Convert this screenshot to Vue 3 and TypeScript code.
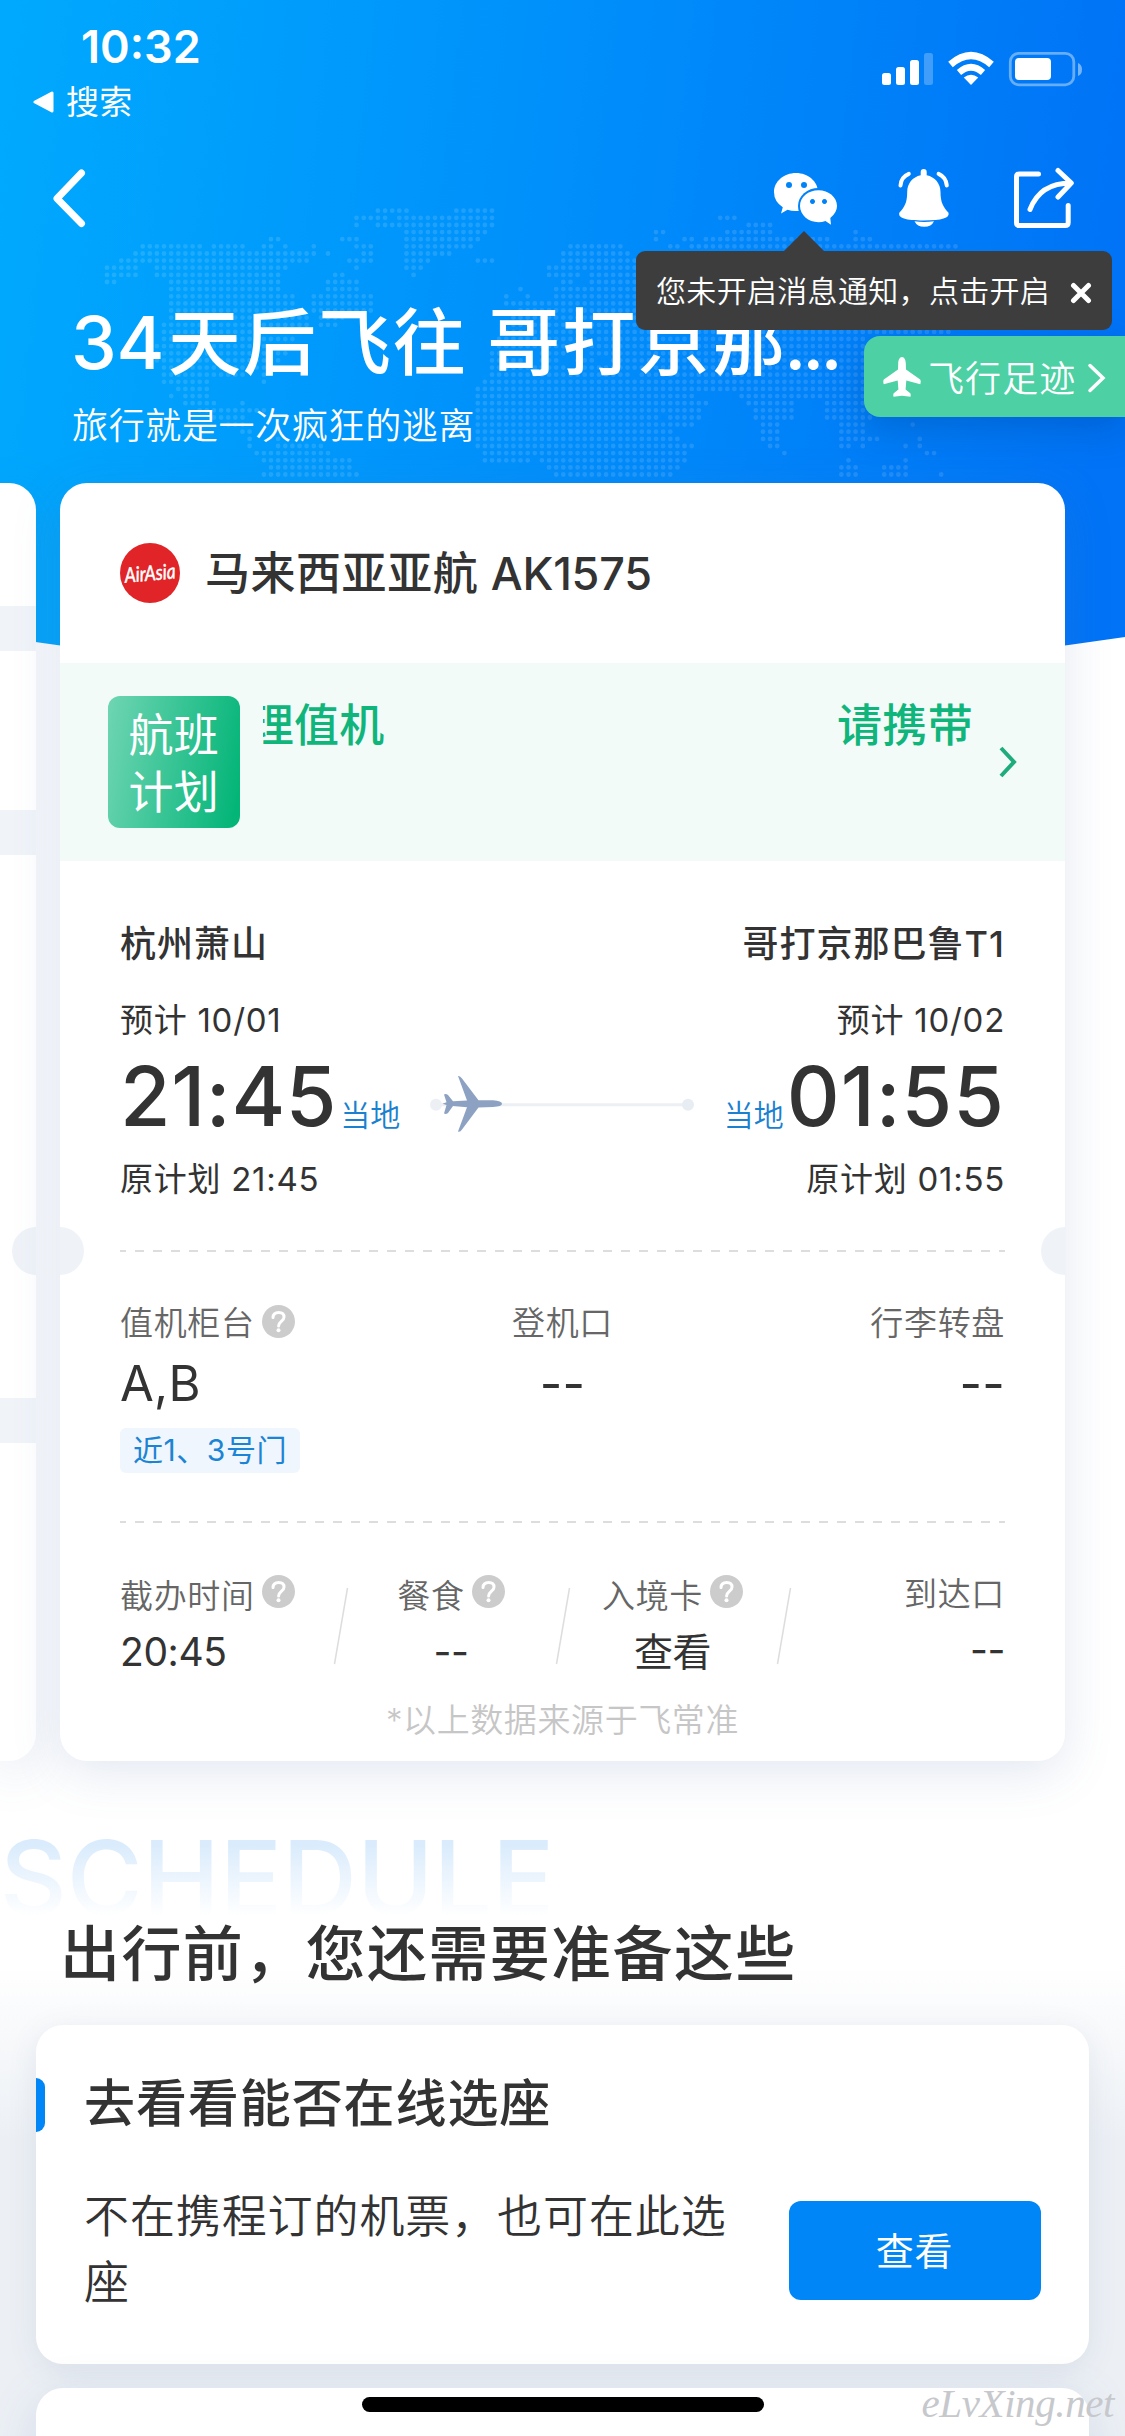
<script setup lang="ts">
type Run = [number, number]

/* World map backdrop: one entry per dot row, each a list of x ranges. */
const PITCH = 7.13
const FIRST_ROW = 210.7
const mapRows: Run[][] = [
  [[375, 404], [453, 489]],
  [[360, 384], [396, 489], [722, 738]],
  [[360, 360], [381, 489], [750, 773]],
  [[410, 483], [658, 665], [728, 773], [856, 856]],
  [[268, 275], [340, 355], [410, 475], [658, 658], [686, 695], [708, 830], [856, 870]],
  [[140, 200], [212, 243], [262, 270], [283, 283], [311, 311], [353, 368], [410, 470], [574, 618], [672, 680], [693, 957]],
  [[135, 312], [326, 326], [362, 370], [404, 450], [566, 625], [660, 990]],
  [[119, 305], [348, 370], [404, 425], [475, 490], [565, 990]],
  [[106, 136], [155, 285], [355, 355], [404, 418], [546, 575], [588, 980]],
  [[106, 134], [155, 280], [332, 340], [411, 411], [546, 575], [590, 970]],
  [[106, 113], [170, 276], [325, 355], [560, 570], [595, 960]],
  [[170, 280], [325, 355], [517, 517], [553, 570], [580, 960]],
  [[170, 290], [312, 370], [503, 503], [525, 525], [553, 570], [580, 960]],
  [[170, 290], [312, 370], [503, 525], [538, 950]],
  [[170, 300], [312, 370], [517, 950]],
  [[170, 305], [320, 345], [510, 950]],
  [[165, 305], [320, 335], [510, 950]],
  [[162, 298], [503, 950]],
  [[162, 290], [496, 585], [600, 860]],
  [[155, 285], [496, 560], [585, 860]],
  [[155, 283], [489, 530], [545, 560], [595, 860]],
  [[155, 276], [489, 520], [545, 553], [575, 590], [610, 860]],
  [[162, 262], [489, 560], [575, 860]],
  [[162, 185], [192, 243], [262, 262], [489, 630], [640, 860]],
  [[162, 210], [262, 262], [482, 690], [700, 860]],
  [[175, 210], [480, 690], [695, 880]],
  [[170, 170], [185, 205], [475, 680], [688, 695], [742, 880]],
  [[185, 215], [240, 240], [475, 705], [750, 795], [830, 870]],
  [[197, 225], [232, 262], [475, 700], [755, 795], [828, 880]],
  [[211, 240], [475, 655], [668, 700], [757, 795], [828, 870]],
  [[226, 240], [475, 660], [670, 690], [762, 778], [838, 862], [912, 912]],
  [[240, 250], [478, 668], [762, 778], [840, 862]],
  [[247, 247], [275, 280], [480, 675], [762, 778], [838, 880], [920, 920]],
  [[247, 247], [275, 320], [480, 690], [770, 780], [838, 848], [863, 863], [905, 905], [920, 920]],
  [[255, 328], [482, 682], [783, 783], [925, 932]],
  [[265, 350], [487, 530], [540, 682], [849, 849], [905, 905]],
  [[268, 352], [552, 675], [842, 858], [887, 905]],
  [[262, 355], [558, 668], [838, 855], [882, 907], [941, 941]],
]
const mapPath = mapRows
  .map((runs, r) =>
    runs
      .map(([from, to]) => {
        const a = Math.round((from - 107) / PITCH)
        const b = Math.round((to - 107) / PITCH)
        let d = ''
        for (let c = a; c <= b; c++) d += `M${(107 + c * PITCH).toFixed(1)} ${(FIRST_ROW + r * PITCH).toFixed(1)}h0`
        return d
      })
      .join(''),
  )
  .join('')

const gates = [
  { label: '值机柜台', value: 'A,B', help: true, tag: '近1、3号门' },
  { label: '登机口', value: '--', help: false, tag: '' },
  { label: '行李转盘', value: '--', help: false, tag: '' },
]
const extras = [
  { label: '截办时间', value: '20:45', help: true },
  { label: '餐食', value: '--', help: true },
  { label: '入境卡', value: '查看', help: true },
  { label: '到达口', value: '--', help: false },
]
</script>

<template>
  <div class="page">
    <svg class="sky" width="1125" height="700" viewBox="0 0 1125 700">
      <defs>
        <linearGradient id="sky" gradientUnits="userSpaceOnUse" x1="0" y1="120" x2="1125" y2="250">
          <stop offset="0" stop-color="#00a9fd" />
          <stop offset="0.5" stop-color="#008ffb" />
          <stop offset="1" stop-color="#0073f6" />
        </linearGradient>
      </defs>
      <path d="M0 0H1125V637Q562 721 0 637Z" fill="url(#sky)" />
      <path :d="mapPath" class="dots" />
    </svg>

    <header class="top">
      <div class="status">
        <div class="clock">
          <div class="time">10:32</div>
          <div class="back-app">
            <svg width="22" height="22" viewBox="0 0 22 22"><path d="M2 11 19 2V20Z" fill="#fff" stroke="#fff" stroke-width="3" stroke-linejoin="round" /></svg>
            <span>搜索</span>
          </div>
        </div>
        <svg class="signals" width="202" height="36" viewBox="881 51 202 36">
          <g fill="#fff">
            <rect x="882" y="73" width="9" height="12" rx="2.5" />
            <rect x="896" y="67" width="9" height="18" rx="2.5" />
            <rect x="910" y="60" width="9" height="25" rx="2.5" />
            <rect x="924" y="53" width="9" height="32" rx="2.5" opacity=".25" />
            <path d="M971 85 963.8 77.6Q971 71.800 978.2 77.600Z" />
            <rect x="1015" y="58" width="36" height="22" rx="4" />
            <path d="M1078 63q4 1.500 4 6.500t-4 6.500z" opacity=".45" />
          </g>
          <g fill="none" stroke="#fff">
            <path d="M950.500 64.500Q971 46.500 991.500 64.500" stroke-width="7" />
            <path d="M959 72.500Q971 62 983 72.500" stroke-width="6.500" />
            <rect x="1010.300" y="53.300" width="63.500" height="31.500" rx="8.500" stroke-width="2.800" opacity=".4" />
          </g>
        </svg>
      </div>

      <nav class="nav">
        <svg class="back" width="40" height="64" viewBox="0 0 40 64"><path d="M30.500 7 6 32.500 30.500 57.500" fill="none" stroke="#fff" stroke-width="7" stroke-linecap="round" stroke-linejoin="round" /></svg>
        <div class="actions">
          <svg width="68" height="64" viewBox="770 166 68 64" fill="#fff">
            <mask id="chat">
              <rect x="770" y="166" width="68" height="64" fill="#fff" />
              <ellipse cx="818.500" cy="206" rx="20.500" ry="18" fill="#000" />
              <circle cx="789" cy="185" r="3" fill="#000" />
              <circle cx="804" cy="185" r="3" fill="#000" />
            </mask>
            <path mask="url(#chat)" d="M796 173C808 173 818 181.500 818 192S808 211 796 211Q791 211 787.500 209.700L781 213.500 782.800 207.300Q774 201.500 774 192C774 181.500 784 173 796 173Z" />
            <path fill-rule="evenodd" d="M818.500 190.300C828.700 190.300 837 197.300 837 206Q837 212.500 830.300 218L831 224.800 825.500 221Q822 222.200 818.500 222.200C808.300 222.200 800 215 800 206S808.300 190.300 818.500 190.300ZM812.500 199a2.500 2.500 0 1 0 .01 0ZM824.500 199a2.500 2.500 0 1 0 .01 0Z" />
          </svg>
          <svg width="54" height="62" viewBox="898 167 54 62">
            <path fill="#fff" d="M920.700 172a3 3 0 0 1 6 0V175.300C935 177 940.500 183.500 940.500 192 940.500 203 943.500 207 948.500 212.800 950 218 942 220.500 923.700 220.500S898 218 899.300 212.800C904.500 207 907.200 203 907.200 192 907.200 183.500 912.500 177 920.700 175.300ZM914.500 221.300Q924 222.700 934 221.300 931.500 226.800 924.300 226.800T914.500 221.300Z" />
            <path d="M900.500 185.500Q901 177 908.800 173.800M946.800 185.500Q946 177 938.600 173.800" fill="none" stroke="#fff" stroke-width="4" stroke-linecap="round" />
          </svg>
          <svg width="64" height="64" viewBox="1012 166 64 64" fill="none" stroke="#fff" stroke-width="5" stroke-linecap="round" stroke-linejoin="round">
            <path d="M1038.500 174H1019.500Q1016.500 174 1016.500 177V222.500Q1016.500 225.500 1019.500 225.500H1065Q1068.200 225.500 1068.200 222.500V205.500M1030 209.500Q1040 183 1071 183M1058 170.500 1071.300 183 1058 197" />
          </svg>
        </div>
      </nav>

      <h1 class="title"><span class="days">34</span>天后飞往 哥打京那<span class="ell">...</span></h1>
      <p class="subtitle">旅行就是一次疯狂的逃离</p>
    </header>

    <div class="tooltip">
      <span>您未开启消息通知，点击开启</span>
      <svg width="22" height="22" viewBox="0 0 22 22"><path d="M3.500 3.500 18.500 18.500M18.500 3.500 3.500 18.500" stroke="#fff" stroke-width="5" stroke-linecap="round" /></svg>
    </div>

    <div class="footprint">
      <svg width="38" height="40" viewBox="0 0 38 40"><path fill="#fff" d="M19 0C21.500 0 22.700 3 22.800 6.500L23 12.500 37.200 22.500Q38.200 24 37.300 27.300L23.300 23.500 22.600 32.500 27.300 36.200Q28 37.500 27.500 39.700L19 38.800 10.500 39.700Q10 37.500 10.700 36.200L15.400 32.500 14.700 23.500.7 27.300Q-.2 24 .8 22.500L15 12.500 15.200 6.500C15.300 3 16.500 0 19 0Z" /></svg>
      <span>飞行足迹</span>
      <svg width="20" height="32" viewBox="0 0 20 32"><path d="M3 3.500 16 16 3 28.500" fill="none" stroke="#fff" stroke-width="3.500" stroke-linecap="round" /></svg>
    </div>

    <section class="carousel">
      <div class="card prev">
        <i class="band b1" /><i class="band b2" /><i class="band b3" />
        <b class="notch right" />
      </div>

      <article class="card flight">
        <b class="notch left" /><b class="notch right" />
        <div class="airline">
          <svg width="60" height="60" viewBox="0 0 60 60">
            <circle cx="30" cy="30" r="30" fill="#e12427" />
            <text x="4.500" y="37.500" class="logo" textLength="51" lengthAdjust="spacingAndGlyphs" transform="rotate(-5 30 30)">AirAsia</text>
          </svg>
          <span>马来西亚亚航 <span class="code">AK1575</span></span>
        </div>

        <div class="plan">
          <div class="plan-badge">航班<br />计划</div>
          <div class="ticker"><span class="slide">理值机</span><span>请携带</span></div>
          <svg width="20" height="34" viewBox="0 0 20 34"><path d="M3 3 16 17 3 31" fill="none" stroke="#1fac7c" stroke-width="4" /></svg>
        </div>

        <div class="body">
          <div class="row airports"><span>杭州萧山</span><span>哥打京那巴鲁T1</span></div>
          <div class="row small est"><span>预计 10/01</span><span>预计 10/02</span></div>
          <div class="row times">
            <div class="clocktime"><strong>21:45</strong><em>当地</em></div>
            <svg class="route" width="270" height="64" viewBox="428 1072 270 64">
              <path d="M437 1104.700H689" stroke="#ecf0f5" stroke-width="3" />
              <circle cx="437" cy="1104.700" r="6" fill="#ecf0f5" /><circle cx="689" cy="1104.700" r="6" fill="#e8edf4" />
              <path fill="#8da2c3" d="M459 1076Q461 1075.500 463 1078.500L479.500 1100.300 494 1100.300Q503 1101 503 1103.700T494 1107L479.500 1107.500 463 1129.500Q461 1132.500 459 1131.500L468 1107.200 454 1106 449 1113Q447 1114.500 445 1113.500L447.500 1105 443.500 1103.700 447.500 1102.300 445 1094.500Q447 1093.500 449 1095L454 1101.200 468 1100.500Z" />
            </svg>
            <div class="clocktime arrive"><em>当地</em><strong>01:55</strong></div>
          </div>
          <div class="row small orig"><span>原计划 21:45</span><span>原计划 01:55</span></div>

          <div class="dash d1" />

          <div class="gates">
            <div v-for="g in gates" :key="g.label" class="gate">
              <div class="label">{{ g.label }}<svg v-if="g.help" class="help" width="33" height="33" viewBox="0 0 33 33"><circle cx="16.500" cy="16.500" r="16.500" fill="#ccc" /><path d="M11 12.600Q11.200 7.500 16.700 7.500T22 12.300C22 16 16.600 16.300 16.600 21" fill="none" stroke="#fff" stroke-width="3" stroke-linecap="round" /><circle cx="16.500" cy="25.300" r="2" fill="#fff" /></svg></div>
              <div class="value">{{ g.value }}</div>
              <div v-if="g.tag" class="tag">{{ g.tag }}</div>
            </div>
          </div>

          <div class="dash d2" />

          <div class="extras">
            <template v-for="(e, i) in extras" :key="e.label">
              <svg v-if="i" class="slash" width="16" height="78" viewBox="0 0 16 78"><path d="M14.500 1 1.500 77" stroke="#ddd" stroke-width="1.500" /></svg>
              <div class="extra">
                <div class="label">{{ e.label }}<svg v-if="e.help" class="help" width="33" height="33" viewBox="0 0 33 33"><circle cx="16.500" cy="16.500" r="16.500" fill="#ccc" /><path d="M11 12.600Q11.200 7.500 16.700 7.500T22 12.300C22 16 16.600 16.300 16.600 21" fill="none" stroke="#fff" stroke-width="3" stroke-linecap="round" /><circle cx="16.500" cy="25.300" r="2" fill="#fff" /></svg></div>
                <div class="value">{{ e.value }}</div>
              </div>
            </template>
          </div>
          <p class="source">*以上数据来源于飞常准</p>
        </div>
      </article>
    </section>

    <section class="prepare">
      <div class="ghost">SCHEDULE</div>
      <h2>出行前，您还需要准备这些</h2>
      <article class="card task">
        <i class="mark" />
        <h3>去看看能否在线选座</h3>
        <div class="task-row">
          <p>不在携程订的机票，也可在此选座</p>
          <button type="button">查看</button>
        </div>
      </article>
      <article class="card next" />
    </section>

    <div class="home" />
    <div class="watermark">eLvXing.net</div>
  </div>
</template>

<style>
body { margin: 0; }
</style>

<style scoped>
.page {
  position: relative;
  width: 1125px;
  height: 2436px;
  overflow: hidden;
  font-family: Inter, "Noto Sans CJK SC", sans-serif;
  color: #333;
  background: linear-gradient(#fff 1965px, #ecf0f5 2140px);
  letter-spacing: 0.02em;
}
h1, h2, h3, p { margin: 0; font-weight: 500; }
svg { display: block; flex: none; }
.sky { position: absolute; left: 0; top: 0; }
.dots { fill: none; stroke: #fff; stroke-opacity: 0.12; stroke-width: 4.800; stroke-linecap: round; }

.top { position: relative; height: 483px; color: #fff; }
.status { display: flex; justify-content: space-between; height: 130px; }
.clock { padding: 20px 0 0 33px; }
.time { margin-left: 48px; font-size: 45px; line-height: 54px; font-weight: 600; letter-spacing: 0; }
.back-app { display: flex; align-items: center; gap: 11px; height: 40px; margin-top: 8px; font-size: 33px; }
.back-app span { line-height: 40px; margin-top: -1px; }
.signals { margin: 51px 42px 0 0; }
.nav { display: flex; align-items: center; justify-content: space-between; height: 136px; padding: 0 49px 0 51px; }
.actions { display: flex; align-items: center; gap: 60px; }
.title { margin: 32px 0 0 71px; font-size: 73px; line-height: 90px; letter-spacing: 0.027em; word-spacing: -2px; white-space: nowrap; }
.days { margin-right: 4px; letter-spacing: -0.005em; }
.ell { margin-left: -3px; letter-spacing: -0.055em; }
.subtitle { margin: 13px 0 0 72px; font-size: 36px; line-height: 50px; font-weight: 350; letter-spacing: 0.018em; }

.tooltip {
  position: absolute; z-index: 3; left: 636px; top: 251px; width: 476px; height: 79px; box-sizing: border-box;
  padding: 0 20px 0 20px; display: flex; align-items: center; justify-content: space-between;
  background: #3d3d3d; border-radius: 9px; color: #fff; font-size: 30px; font-weight: 350; white-space: nowrap;
}
.tooltip span { margin-top: -3px; }
.tooltip svg { margin-top: 4px; }
.tooltip::before {
  content: ""; position: absolute; left: 148px; top: -20px;
  border: 20px solid transparent; border-top: 0; border-bottom-color: #3d3d3d;
}
.footprint {
  position: absolute; z-index: 2; left: 864px; top: 336px; width: 261px; height: 81px; box-sizing: border-box;
  padding: 0 18px 0 19px; display: flex; align-items: center;
  background: #4dd0a3; border-radius: 16px 0 0 16px; color: #fff; font-size: 36px; font-weight: 350;
  box-shadow: 0 12px 36px rgba(0, 70, 150, 0.35);
}
.footprint span { margin: -2px auto 0 7px; letter-spacing: 0.03em; white-space: nowrap; }
.footprint svg:last-child { margin-top: 3px; }

.carousel { position: relative; display: flex; gap: 24px; height: 1278px; }
.card { position: relative; background: #fff; border-radius: 27px; box-shadow: 0 12px 48px rgba(90, 120, 170, 0.17); flex: none; }
.prev { width: 36px; border-radius: 0 27px 27px 0; display: flex; flex-direction: column; }
.band { height: 45px; background: #f0f4f9; }
.b1 { margin-top: 123px; }
.b2 { margin-top: 159px; }
.b3 { margin-top: 543px; }
.notch { position: absolute; top: 744px; width: 24px; height: 48px; background: #eff3f8; }
.notch.right { right: 0; border-radius: 24px 0 0 24px; }
.notch.left { left: 0; border-radius: 0 24px 24px 0; }
.flight { width: 1005px; }
.airline { display: flex; align-items: center; gap: 25px; height: 180px; padding-left: 60px; font-size: 45px; line-height: 60px; font-weight: 500; letter-spacing: 0.012em; }
.airline > span { margin-top: 2px; }
.code { letter-spacing: -0.005em; }
.logo { font: italic 400 21px "Lato", sans-serif; fill: #fff; stroke: #fff; stroke-width: 0.5; letter-spacing: 0; }
.plan { display: flex; align-items: center; height: 198px; padding: 0 47px 0 48px; background: #f2fbf8; }
.plan-badge {
  width: 132px; height: 132px; box-sizing: border-box; padding-top: 11px; border-radius: 12px; text-align: center;
  font-size: 45px; line-height: 57px; color: #fff; background: linear-gradient(100deg, #6fd5b3, #04b578 95%);
}
.ticker { display: flex; justify-content: space-between; align-self: flex-start; width: 712px; margin: 34px 25px 0 23px; overflow: hidden; font-size: 45px; line-height: 57px; font-weight: 500; color: #10b57c; }
.slide { margin-left: -14px; }

.body { padding: 58px 60px 0; }
.row { display: flex; justify-content: space-between; }
.airports { font-size: 36px; line-height: 50px; font-weight: 500; letter-spacing: 0.028em; }
.small { font-size: 33px; line-height: 40px; font-weight: 400; letter-spacing: 0.022em; }
.est { margin-top: 31px; }
.times { margin-top: 15px; height: 84px; align-items: center; }
.clocktime { display: flex; align-items: baseline; line-height: 84px; }
.clocktime strong { font-size: 82px; font-weight: 500; letter-spacing: 0.008em; }
.clocktime em { margin: 0 3px; font-size: 30px; line-height: 30px; font-style: normal; font-weight: 350; color: #1a80d0; letter-spacing: 0; }
.arrive strong { letter-spacing: 0.012em; }
.route { margin-top: 13px; }
.orig { margin-top: 20px; }
.dash { height: 2px; background: repeating-linear-gradient(90deg, #ddd 0 9px, transparent 9px 18px) -3px 0; }
.d1 { margin-top: 51px; }
.d2 { margin-top: 48px; }
.gates { display: grid; grid-template-columns: 1fr 1fr 1fr; height: 170px; margin-top: 51px; }
.gate { text-align: center; }
.gate:first-child { text-align: left; }
.gate:last-child { text-align: right; }
.label { position: relative; display: inline-flex; font-size: 33px; line-height: 40px; font-weight: 350; color: #666; letter-spacing: 0.02em; }
.help { margin: 2px 0 0 7px; }
.gate .value { margin-top: 11px; font-size: 49px; line-height: 60px; letter-spacing: 0.005em; }
.tag { width: 180px; margin-top: 14px; border-radius: 6px; background: #f0f6fd; font-size: 30px; line-height: 45px; font-weight: 400; text-align: center; color: #1c84d4; letter-spacing: 0.018em; }
.extras { display: grid; grid-template-columns: 213px 14px 208px 14px 207px 14px 215px; margin-top: 53px; height: 100px; }
.extra { text-align: center; }
.extra:first-child { text-align: left; }
.extra:last-child { text-align: right; margin-top: -2px; }
.extra .help { margin-top: -1px; }
.extra .value { margin-top: 12px; font-size: 39px; line-height: 48px; letter-spacing: -0.01em; }
.slash { margin-top: 11px; }
.source { margin-top: 24px; font-size: 33px; line-height: 40px; font-weight: 350; text-align: center; color: #c6c6c6; letter-spacing: 0.018em; }

.ghost {
  width: 600px; margin-top: 67px; font-size: 103.5px; line-height: 100px; font-weight: 500; letter-spacing: 0;
  color: transparent; background: linear-gradient(#d9ebfc 15px, #fff 88px); background-clip: text; -webkit-background-clip: text;
}
h2 { position: relative; margin: -9px 0 0 60px; font-size: 60px; line-height: 70px; letter-spacing: 0.023em; }
.task { height: 339px; margin: 36px 36px 0; box-sizing: border-box; padding: 49px 48px 0 48px; border-radius: 27px; box-shadow: 0 6px 30px rgba(70, 90, 130, 0.1); }
.mark { position: absolute; left: 0; top: 53px; width: 9px; height: 54px; border-radius: 0 9px 9px 0; background: #0086f6; }
h3 { font-size: 51px; line-height: 60px; letter-spacing: 0.018em; }
.task-row { display: flex; justify-content: space-between; margin-top: 50px; }
.task-row p { width: 670px; font-size: 45px; line-height: 66px; font-weight: 350; letter-spacing: 0.02em; }
button { width: 252px; height: 99px; margin: 17px 0 0; padding: 0 1px 4px 0; border: 0; border-radius: 12px; background: #0086f6; color: #fff; font: 400 38px Inter, "Noto Sans CJK SC", sans-serif; letter-spacing: 0.02em; }
.next { height: 100px; margin: 24px 36px 0; }
.home { position: absolute; left: 362px; top: 2397px; width: 402px; height: 15px; border-radius: 8px; background: #000; }
.watermark { position: absolute; right: 11px; top: 2376px; font: italic 41px/54px "Liberation Serif", serif; color: #c6c8cc; letter-spacing: -0.01em; }
</style>
